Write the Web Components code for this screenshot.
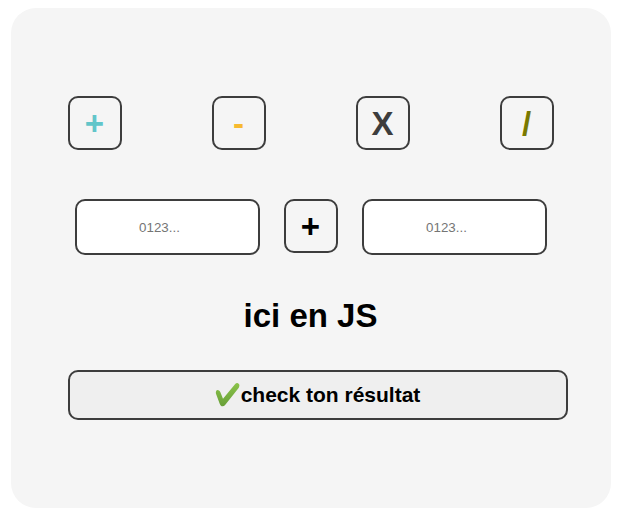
<!DOCTYPE html>
<html lang="fr"><head><meta charset="utf-8"><title>Calcul</title>
<style>
body{margin:8px 10px 0 11px;font-family:"Liberation Sans",Arial,sans-serif;background:#fff}
</style></head><body>
<calc-card></calc-card>
<script>
customElements.define('op-tile', class extends HTMLElement{
  constructor(){super();this.attachShadow({mode:'open'}).innerHTML=`<style>
  :host{box-sizing:border-box;width:54px;height:54px;padding:2px 1px 0 0;border:2px solid #3d3d3d;border-radius:10px;display:flex;align-items:center;justify-content:center;font-size:33px;line-height:38px;font-weight:700}
  </style><slot></slot>`;}
});
customElements.define('number-field', class extends HTMLElement{
  constructor(){super();this.attachShadow({mode:'open'}).innerHTML=`<style>
  :host{display:block;width:185px;height:56px}
  input{box-sizing:border-box;display:block;width:100%;height:100%;margin:0;padding:1px 18px 1px 2px;border:2px solid #3d3d3d;border-radius:10px;background:#fff;text-align:center;font:13.333px "Liberation Sans",Arial,sans-serif}
  input::placeholder{color:#757575}
  </style><input placeholder="0123...">`;}
});
customElements.define('check-button', class extends HTMLElement{
  constructor(){super();this.attachShadow({mode:'open'}).innerHTML=`<style>
  :host{display:block;width:500px;height:50px}
  button{box-sizing:border-box;width:100%;height:100%;display:flex;align-items:center;justify-content:center;padding:0 1px 0 0;border:2px solid #3d3d3d;border-radius:10px;background:#efefef;color:#000;font:700 21px/24px "Liberation Sans",Arial,sans-serif}
  svg{width:26px;height:26px;flex:none}
  </style><button><svg viewBox="0 0 26 26"><defs><linearGradient id="g" x1="0" y1="0" x2="0" y2="1"><stop offset="0" stop-color="#8bc34a"/><stop offset="1" stop-color="#689f38"/></linearGradient></defs><path fill="url(#g)" d="M1 9.4Q1.6 7.8 3.4 8.2 4.9 8.5 5.4 10.2L8 16.8 20.2 2Q21.3.8 23 1.2 24.6 1.9 24.4 3.8L23.8 5.8 10.3 22.8Q8.7 24.8 6.6 24.2 5.3 23.8 4.6 21.5L1 11.7Q.6 10.5 1 9.4Z"/></svg><slot></slot></button>`;}
});
customElements.define('calc-card', class extends HTMLElement{
  constructor(){super();this.attachShadow({mode:'open'}).innerHTML=`<style>
  :host{box-sizing:border-box;display:flex;flex-direction:column;width:600px;height:500px;padding:88px 43px 0 57px;border-radius:25px;background:#f5f5f5}
  .ops{display:flex;justify-content:space-between;width:486px}
  .sum{display:flex;gap:24px;margin:49px 0 0 7px}
  h1{margin:41px 0 35px;width:485px;font-size:33px;line-height:39px;text-align:center}
  </style>
  <div class="ops"><op-tile style="color:#62c5c9">+</op-tile><op-tile style="color:#f7b92f">-</op-tile><op-tile style="color:#3d3d3d">X</op-tile><op-tile style="color:#797900">/</op-tile></div>
  <div class="sum"><number-field></number-field><op-tile>+</op-tile><number-field></number-field></div>
  <h1>ici en JS</h1>
  <check-button>check ton résultat</check-button>`;}
});
</script></body></html>
